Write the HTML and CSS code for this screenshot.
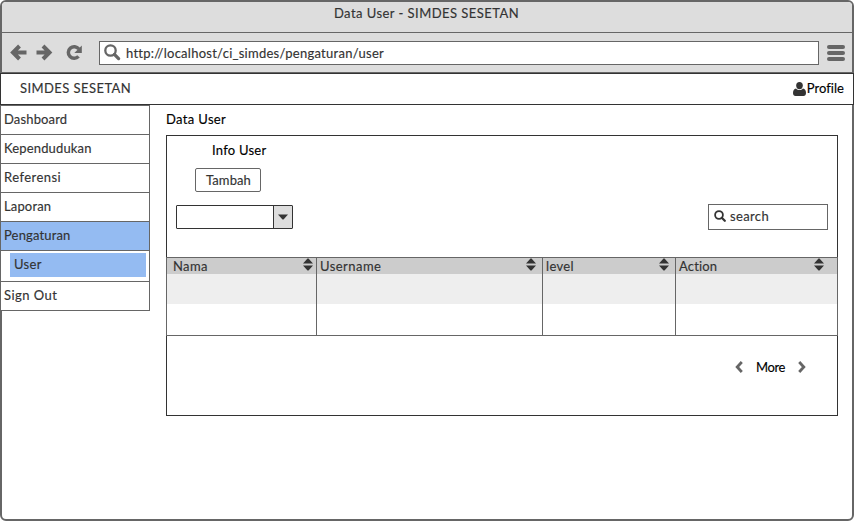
FILE: index.html
```html
<!DOCTYPE html>
<html lang="id">
<head>
<meta charset="utf-8">
<title>Data User - SIMDES SESETAN</title>
<link rel="stylesheet" href="styles.css">
</head>
<body>
<div class="window">
  <div class="titlebar"><span class="t-title">Data User - SIMDES SESETAN</span></div>
  <div class="toolbar">
    <svg class="nav" width="84" height="18" viewBox="0 0 84 18">
      <g fill="none" stroke="#666" stroke-width="4">
        <path d="M16.500 8.500H4M9.500 2L3 8.500l6.500 6.500"/>
        <path d="M26.500 8.500h13M33 2l6.500 6.500L33 15"/>
        <path d="M68.500 12.300A5.800 5.800 0 1 1 68.800 5" stroke-width="3.500"/>
      </g>
      <path d="M71.800 1.500v7.500h-7.500z" fill="#666"/>
    </svg>
    <div class="address">
      <svg width="18" height="18" viewBox="0 0 18 18" fill="none" stroke="#666"><circle cx="6.500" cy="6.500" r="5.200" stroke-width="2.300"/><path d="M10.400 10.400l4.200 4.200" stroke-width="3.300" stroke-linecap="round"/></svg>
      <span class="t-url">http://localhost/ci_simdes/pengaturan/user</span>
    </div>
    <div class="burger"><i></i><i></i><i></i></div>
  </div>
  <header class="header">
    <span class="t-brand">SIMDES SESETAN</span>
    <a class="profile">
      <svg width="13" height="14" viewBox="0 0 13 14" fill="#333"><ellipse cx="6.500" cy="3.600" rx="3.300" ry="3.600"/><path d="M3 6.500C1 7 0 8.500 0 11c0 2 1 3 2.500 3h8c1.500 0 2.500-1 2.500-3 0-2.500-1-4-3-4.500-2 2-5 2-7 0z"/></svg>
      <span class="t-profile">Profile</span>
    </a>
  </header>
  <div class="body">
    <nav class="sidebar">
      <a class="item tight">Dashboard</a>
      <a class="item tight">Kependudukan</a>
      <a class="item loose">Referensi</a>
      <a class="item tight">Laporan</a>
      <a class="item active tight">Pengaturan</a>
      <div class="submenu"><a>User</a></div>
      <a class="item loose">Sign Out</a>
    </nav>
    <main class="main">
      <h1>Data User</h1>
      <section class="panel">
        <h2>Info User</h2>
        <button class="add">Tambah</button>
        <div class="controls">
          <div class="select"><span class="arrow"><svg width="10" height="6" viewBox="0 0 10 6"><path d="M0 .5h10L5.500 5.500h-1z" fill="#333"/></svg></span></div>
          <div class="search">
            <svg width="12" height="12" viewBox="0 0 12 12" fill="none" stroke="#333"><circle cx="5" cy="5" r="3.900" stroke-width="1.800"/><path d="M7.800 7.800l3 3" stroke-width="2.200" stroke-linecap="round"/></svg>
            <span class="t-search">search</span>
          </div>
        </div>
        <div class="table">
          <div class="col"><div class="th"><span>Nama</span><svg class="sort" width="10" height="13" viewBox="0 0 10 13"><path d="M0 5.500L4.500.500h1l4.500 5zM0 7.500h10l-4.500 5h-1z"/></svg></div><div class="cell"></div></div>
          <div class="col"><div class="th"><span class="loose">Username</span><svg class="sort" width="10" height="13" viewBox="0 0 10 13"><path d="M0 5.500L4.500.500h1l4.500 5zM0 7.500h10l-4.500 5h-1z"/></svg></div><div class="cell"></div></div>
          <div class="col"><div class="th"><span>level</span><svg class="sort" width="10" height="13" viewBox="0 0 10 13"><path d="M0 5.500L4.500.500h1l4.500 5zM0 7.500h10l-4.500 5h-1z"/></svg></div><div class="cell"></div></div>
          <div class="col"><div class="th"><span class="tight">Action</span><svg class="sort" width="10" height="13" viewBox="0 0 10 13"><path d="M0 5.500L4.500.500h1l4.500 5zM0 7.500h10l-4.500 5h-1z"/></svg></div><div class="cell"></div></div>
        </div>
        <div class="pager">
          <svg width="8" height="12" viewBox="0 0 8 12"><path d="M6.800 1L2.200 6l4.600 5"/></svg>
          <span class="t-more">More</span>
          <svg width="8" height="12" viewBox="0 0 8 12"><path d="M1.200 1L5.800 6l-4.600 5"/></svg>
        </div>
      </section>
    </main>
  </div>
</div>
</body>
</html>
```
FILE: styles.css
```css
* { box-sizing: border-box; }
body {
  margin: 0;
  background: #fff;
  color: #333;
  font: 13px/18px Lato, "Open Sans", sans-serif;
  letter-spacing: .35px;
  -webkit-text-stroke: .15px currentColor;
}
h1, h2 { margin: 0; font: inherit; color: #000; }
svg { display: block; flex: none; }
.tight { letter-spacing: .15px; }
.loose { letter-spacing: .45px; }
.t-title { letter-spacing: .45px; }
.t-url { letter-spacing: .26px; }
.t-brand { letter-spacing: .43px; }
.t-profile { letter-spacing: .05px; }
.window {
  width: 854px;
  height: 521px;
  border: 2px solid #666;
  border-radius: 6px;
  display: flex;
  flex-direction: column;
}
.titlebar {
  height: 31px;
  padding: 2px 1px 0 0;
  text-align: center;
  background: #ddd;
  border-bottom: 1px solid #666;
  border-radius: 4px 4px 0 0;
}
.toolbar {
  height: 40px;
  display: flex;
  align-items: center;
  background: #ddd;
  border-bottom: 1px solid #666;
  padding: 0 5px 0 8px;
}
.nav { margin-right: 5px; }
.address {
  width: 720px;
  height: 24px;
  border: 1px solid #666;
  background: #fff;
  display: flex;
  align-items: center;
  padding-left: 4px;
  gap: 4px;
}
.burger { width: 18px; margin-left: 8px; display: grid; gap: 2px; }
.burger i { height: 4px; border-radius: 2px; background: #666; }
.header {
  height: 32px;
  margin: 0 -2px;
  border: 1px solid #333;
  background: #fff;
  display: flex;
  justify-content: space-between;
  align-items: center;
  padding: 0 9px 2px 19px;
}
.profile { display: flex; align-items: center; gap: 1px; color: #000; }
.profile svg { margin-top: 2px; }
.body { flex: 1; display: flex; }
.sidebar {
  width: 150px;
  height: 206px;
  margin-left: -2px;
  border: 1px solid #666;
  background: #fff;
}
.item {
  display: block;
  height: 29px;
  padding: 4px 0 0 3px;
  border-bottom: 1px solid #666;
}
.item:last-child { border-bottom: 0; }
.active { background: #94bbf2; }
.submenu { height: 31px; padding: 2px 3px 4px 9px; border-bottom: 1px solid #666; }
.submenu a { display: block; height: 24px; padding: 2px 4px; background: #94bbf2; }
.main { width: 672px; margin-left: 16px; padding-top: 5px; }
.panel {
  height: 281px;
  margin-top: 7px;
  border: 1px solid #333;
  padding-top: 5px;
}
.panel h2 { margin-left: 45px; letter-spacing: .25px; }
.add {
  display: block;
  width: 66px;
  height: 24px;
  margin: 9px 0 0 28px;
  padding: 0 0 1px 1px;
  border: 1px solid #666;
  border-radius: 2px;
  background: #fff;
  font: inherit;
  color: #333;
  letter-spacing: .1px;
}
.controls {
  display: flex;
  justify-content: space-between;
  align-items: center;
  margin: 12px 9px 27px;
}
.select {
  width: 117px;
  height: 24px;
  border: 1px solid #333;
  border-radius: 1px;
  display: flex;
  justify-content: flex-end;
}
.arrow {
  width: 19px;
  border-left: 1px solid #333;
  background: #ddd;
  display: grid;
  place-items: center;
}
.search {
  width: 120px;
  height: 26px;
  border: 1px solid #666;
  display: flex;
  align-items: center;
  gap: 4px;
  padding: 0 0 2px 5px;
}
.table {
  height: 79px;
  margin: 0 -1px;
  border: 1px solid #666;
  display: grid;
  grid-template-columns: 149px 226px 133px 162px;
}
.col + .col { border-left: 1px solid #666; }
.th {
  height: 16px;
  line-height: 16px;
  background: #ccc;
  display: flex;
  justify-content: space-between;
  padding: 0 3px;
}
.col:first-child .th { padding-left: 6px; }
.col:nth-child(2) .th, .col:nth-child(3) .th { padding-right: 6px; }
.col:last-child .th { padding-right: 13px; }
.sort { fill: #333; }
.cell { height: 30px; background: #eee; }
.pager {
  display: flex;
  justify-content: flex-end;
  align-items: center;
  gap: 13px;
  margin: 22px 31px 0 0;
}
.pager svg { fill: none; stroke: #666; stroke-width: 2.8px; }
.t-more { color: #000; letter-spacing: -.4px; }
```
